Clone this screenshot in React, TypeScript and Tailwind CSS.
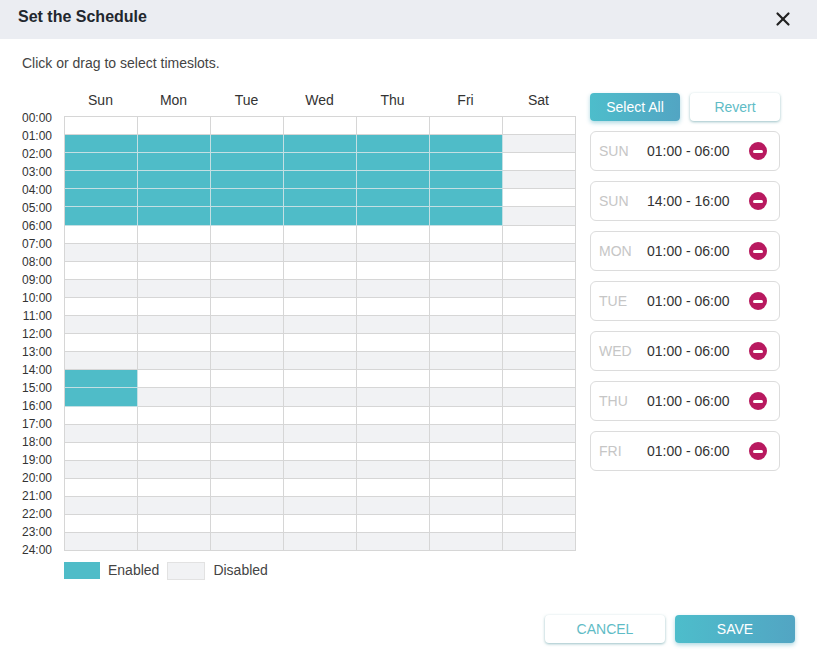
import React from "react";
import { X } from "lucide-react";

const days = ["Sun", "Mon", "Tue", "Wed", "Thu", "Fri", "Sat"];
const hours = Array.from({ length: 25 }, (_, i) => `${String(i).padStart(2, "0")}:00`);

const ranges = [
  { day: "SUN", time: "01:00 - 06:00" },
  { day: "SUN", time: "14:00 - 16:00" },
  { day: "MON", time: "01:00 - 06:00" },
  { day: "TUE", time: "01:00 - 06:00" },
  { day: "WED", time: "01:00 - 06:00" },
  { day: "THU", time: "01:00 - 06:00" },
  { day: "FRI", time: "01:00 - 06:00" },
];

const isEnabled = (day: number, hour: number) =>
  (day < 6 && hour >= 1 && hour < 6) || (day === 0 && hour >= 14 && hour < 16);

const cellClass = (day: number, hour: number) => {
  if (isEnabled(day, hour)) {
    return "bg-[#4fbcc8] border-r border-b border-[#c4dfe3]";
  }
  return `border-r border-b border-[#d6d6d6] ${hour % 2 === 1 ? "bg-[#f1f2f4]" : "bg-white"}`;
};

const RemoveIcon = () => (
  <span className="flex h-[18px] w-[18px] items-center justify-center rounded-full bg-[#b8195f]">
    <span className="h-[3px] w-[10px] rounded-sm bg-white" />
  </span>
);

export default function App() {
  return (
    <div className="relative h-[659px] w-[817px] overflow-hidden bg-white font-['Liberation_Sans',Arial,sans-serif] text-[14px] text-[#333]">
      <header className="flex h-[39px] items-center justify-between bg-[#ebedf2] pl-[18px] pr-[23px]">
        <h1 className="-mt-[6px] text-[16px] font-bold text-[#22272e]">Set the Schedule</h1>
        <X size={22} strokeWidth={2.4} className="-mt-[2px] text-[#222]" />
      </header>

      <p className="mt-[15px] pl-[22px] text-[14px] leading-[18px] text-[#444]">
        Click or drag to select timeslots.
      </p>

      <div className="mt-[19px] flex">
        <div className="flex w-[576px] shrink-0">
          <div className="w-[52px] shrink-0 pt-[18px] text-right text-[12px] text-[#333]">
            {hours.map((h) => (
              <div key={h} className="h-[18px] leading-[18px]">
                {h}
              </div>
            ))}
          </div>
          <div className="ml-[12px] w-[512px]">
            <div className="grid h-[25px] grid-cols-[repeat(7,73px)]">
              {days.map((d) => (
                <div key={d} className="-mt-[1px] text-center text-[14px] leading-[20px] text-[#333]">
                  {d}
                </div>
              ))}
            </div>
            <div className="grid grid-cols-[repeat(7,73px)] grid-rows-[repeat(24,18.1px)] border-l border-t border-[#d6d6d6]">
              {Array.from({ length: 24 }, (_, hour) =>
                days.map((d, day) => <div key={`${d}-${hour}`} className={cellClass(day, hour)} />)
              )}
            </div>
            <div className="mt-[9px] flex items-center text-[14px] text-[#444]">
              <span className="h-[17px] w-[36px] bg-[#4fbcc8]" />
              <span className="ml-[8px]">Enabled</span>
              <span className="ml-[8px] h-[18px] w-[38px] border border-[#e2e2e2] bg-[#f1f2f4]" />
              <span className="ml-[8px]">Disabled</span>
            </div>
          </div>
        </div>

        <div className="ml-[14px] mt-[2px] w-[190px]">
          <div className="flex gap-[10px]">
            <button className="h-[28px] w-[90px] rounded-[4px] bg-gradient-to-r from-[#4dbdcb] to-[#52a5c3] text-[14px] text-white shadow-[0_2px_4px_rgba(78,170,190,0.45)]">
              Select All
            </button>
            <button className="h-[28px] w-[90px] rounded-[4px] bg-white text-[14px] text-[#5fbcc6] shadow-[0_1px_3px_rgba(70,140,150,0.55)]">
              Revert
            </button>
          </div>
          <div className="mt-[10px] flex flex-col gap-[10px]">
            {ranges.map((r) => (
              <div
                key={r.day + r.time}
                className="flex h-[40px] items-center rounded-[6px] border border-[#dcdcdc] bg-white pl-[8px] pr-[12px]"
              >
                <span className="w-[48px] text-[14px] text-[#c6c6c6]">{r.day}</span>
                <span className="flex-1 text-[14px] text-[#333]">{r.time}</span>
                <RemoveIcon />
              </div>
            ))}
          </div>
        </div>
      </div>

      <footer className="absolute bottom-[16px] left-[545px] flex gap-[10px]">
        <button className="h-[28px] w-[120px] rounded-[4px] bg-white text-[14px] text-[#5fbcc6] shadow-[0_1px_3px_rgba(70,140,150,0.55)]">
          CANCEL
        </button>
        <button className="h-[28px] w-[120px] rounded-[4px] bg-gradient-to-r from-[#4dbdcb] to-[#52a5c3] text-[14px] text-white shadow-[0_2px_4px_rgba(78,170,190,0.45)]">
          SAVE
        </button>
      </footer>
    </div>
  );
}
